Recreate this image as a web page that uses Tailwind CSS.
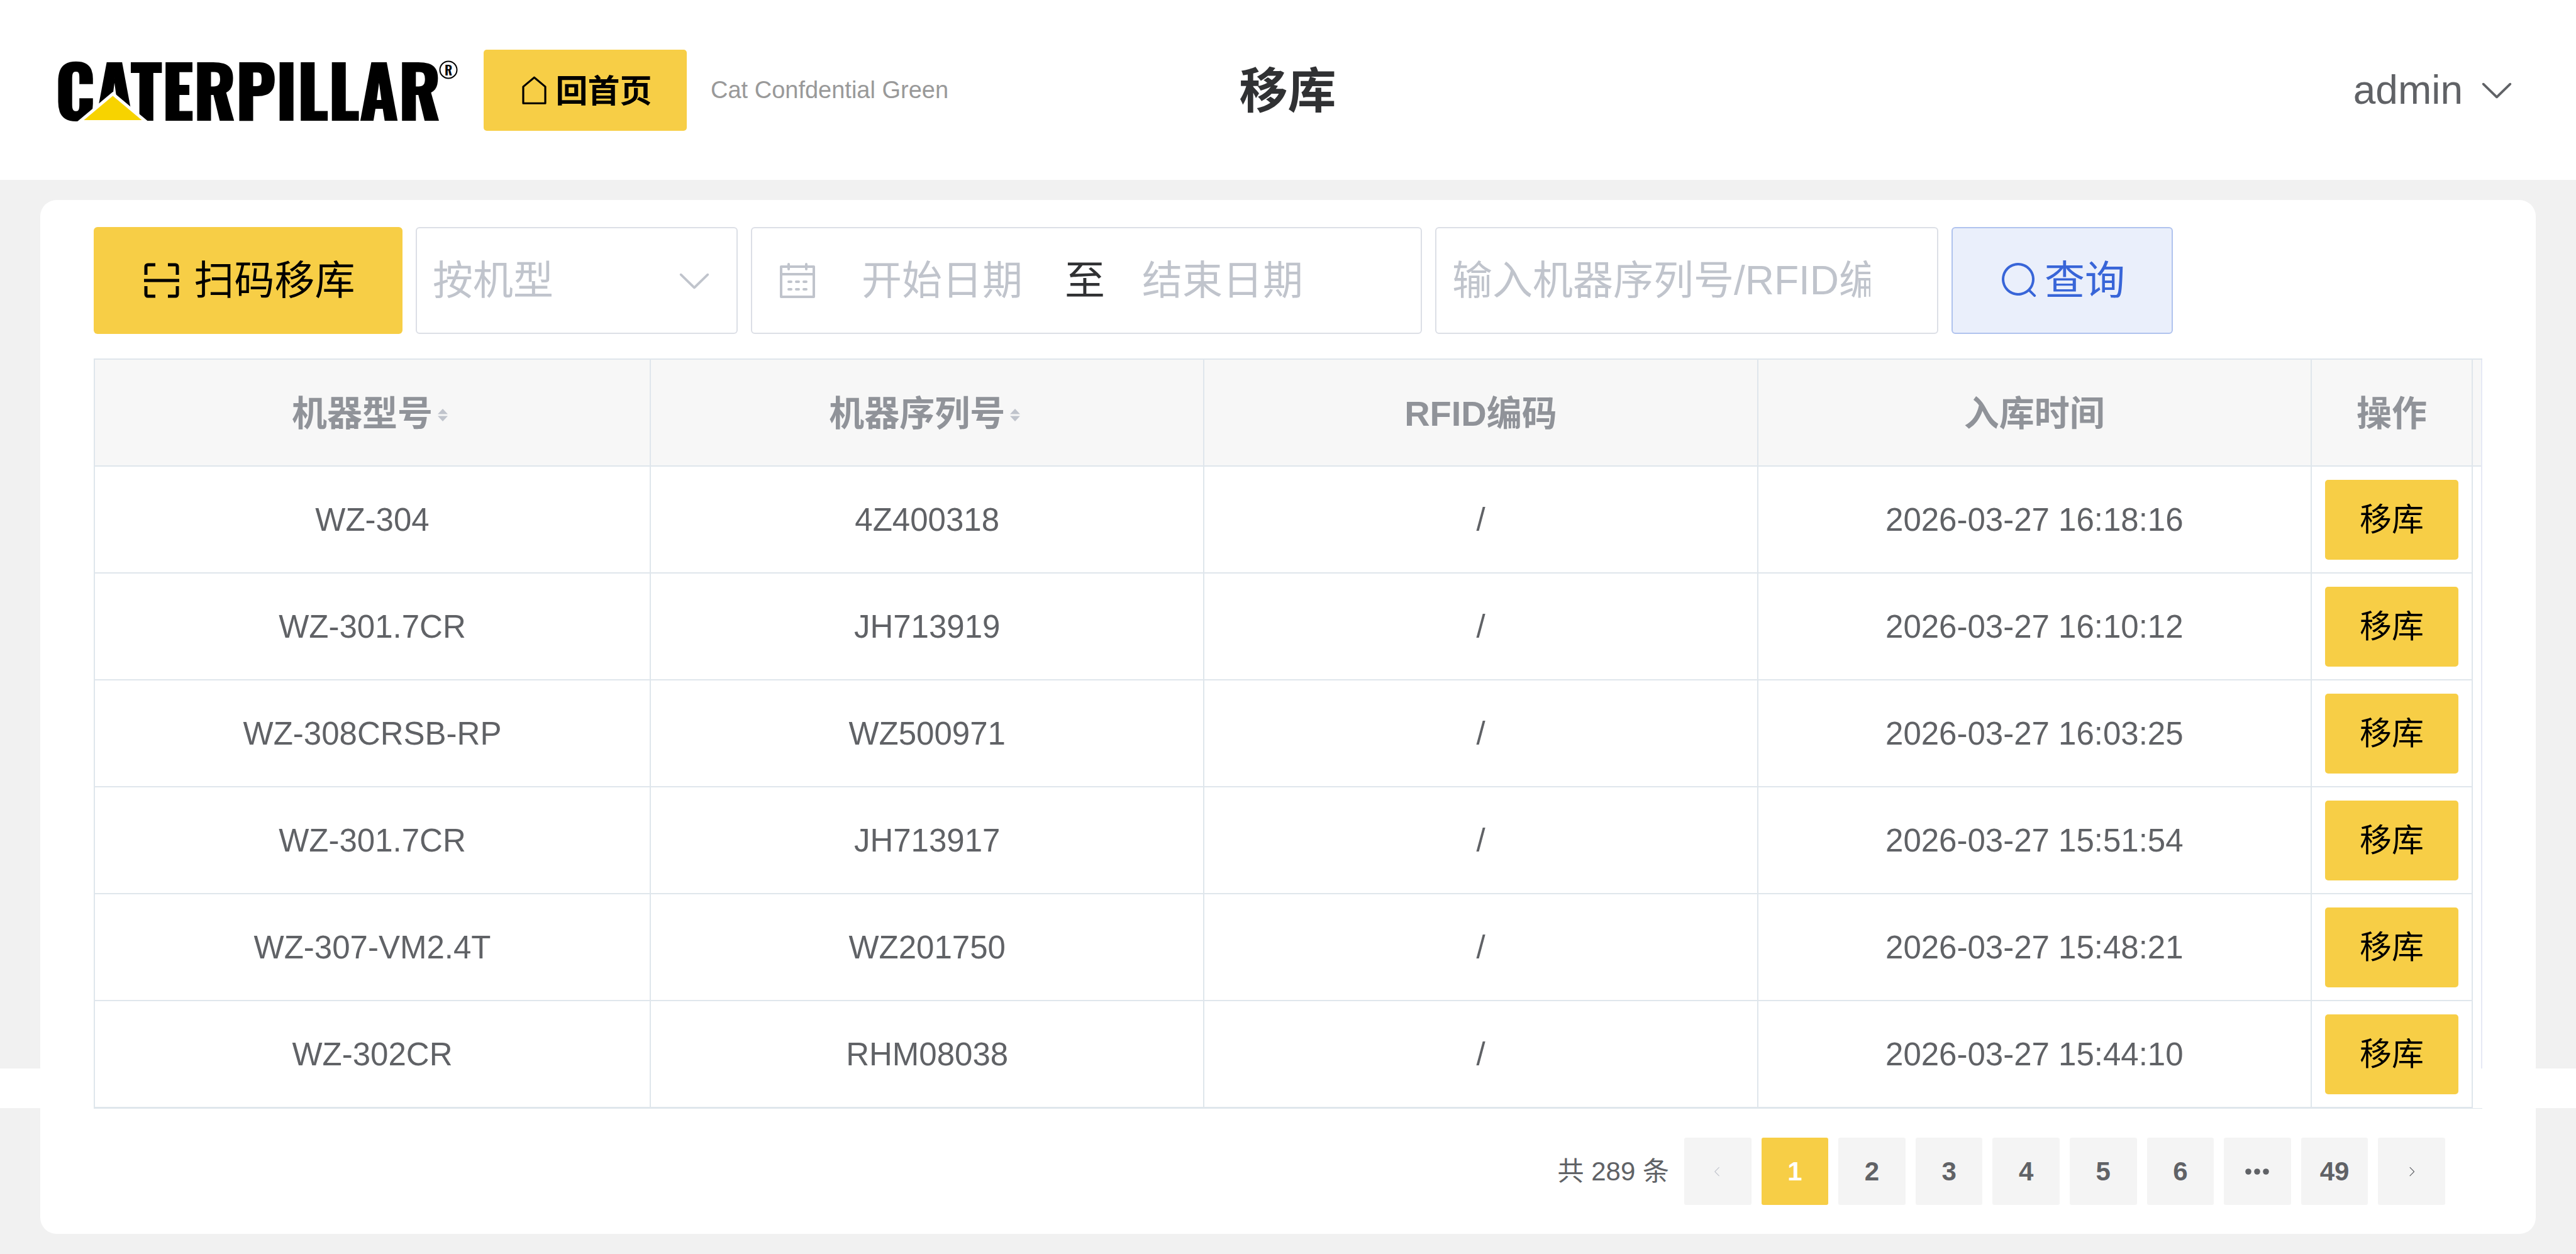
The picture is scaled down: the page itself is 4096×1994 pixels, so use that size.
<!DOCTYPE html>
<html lang="zh-CN">
<head>
    <meta charset="UTF-8">
    <meta name="viewport" content="width=device-width, initial-scale=1.0">
    <title>移库</title>
    <script src="https://cdn.jsdelivr.net/npm/@tailwindcss/browser@4"></script>
</head>
<body class="min-h-screen flex flex-col bg-white font-['Liberation_Sans','Noto_Sans_CJK_SC',sans-serif] text-[#606266]">
    <!-- Top bar -->
    <header class="h-[286px] shrink-0 grid grid-cols-[1fr_auto_1fr] items-center pl-[93px] pr-[94px]">
        <div class="flex items-center">
            <svg class="w-[636px] h-[96px] shrink-0 overflow-visible" viewBox="0 0 636 96" role="img" aria-label="Caterpillar">
                <text x="-5" y="96" font-size="112" font-weight="700" font-family="Oswald, 'Open Sans Condensed', sans-serif" stroke="#000" stroke-width="2">CATERPILLAR</text>
                <path d="M86.4 57.6 132.4 96H40.4z" fill="#fff" stroke="#fff" stroke-width="10"/>
                <path d="M86.4 57.6 132.4 96H40.4z" fill="#f7d300"/>
                <circle cx="620" cy="16" r="13.5" fill="none" stroke="#000" stroke-width="2"/>
                <text x="620" y="25" text-anchor="middle" font-size="21" font-weight="600" font-family="Oswald, 'Open Sans Condensed', sans-serif">R</text>
            </svg>
            <button class="ml-10 w-[323px] h-[129px] flex items-center justify-center gap-2 rounded-[5px] bg-[#f7ce46] text-black text-[51px] leading-none font-bold">
                <svg class="size-[51px]" viewBox="0 0 1024 1024" fill="currentColor"><path d="M192 413.952V896h640V413.952L512 147.328zM139.52 374.4l352-293.312a32 32 0 0 1 40.96 0l352 293.312A32 32 0 0 1 896 398.976V928a32 32 0 0 1-32 32H160a32 32 0 0 1-32-32V398.976a32 32 0 0 1 11.52-24.576"/></svg>
                <span class="pt-1">回首页</span>
            </button>
            <span class="ml-[38px] text-[38px] leading-none text-[#999]">Cat Confdential Green</span>
        </div>
        <h1 class="pt-1 text-[77px] leading-none font-bold text-[#303133]">移库</h1>
        <button class="justify-self-end flex items-center gap-[22px] text-[64px] leading-none">
            <span>admin</span>
            <svg class="size-16" viewBox="0 0 1024 1024" fill="currentColor"><path d="M831.872 340.864 512 652.672 192.128 340.864a30.592 30.592 0 0 0-42.752 0 29.12 29.12 0 0 0 0 41.6L489.664 714.24a32 32 0 0 0 44.672 0l340.288-331.712a29.12 29.12 0 0 0 0-41.728 30.592 30.592 0 0 0-42.752 0z"/></svg>
        </button>
    </header>

    <main class="relative isolate grow bg-[#f1f1f1] px-16 py-8">
        <!-- White strip behind the card -->
        <div class="absolute -z-10 inset-x-0 bottom-[232px] h-[63px] bg-white"></div>

        <section class="bg-white rounded-[26px] px-[85px] pt-[43px] pb-[46px]">
            <!-- Filters -->
            <form class="flex gap-[21px] mb-[39px] text-[64px] leading-none" onsubmit="return false">
                <button type="button" class="w-[491px] h-[170px] flex items-center justify-center gap-5 rounded-[6px] bg-[#f7ce46] text-black">
                    <svg class="size-16" viewBox="0 0 64 64" fill="none" stroke="currentColor" stroke-width="5">
                        <path d="M7 23V10a3 3 0 0 1 3-3h12M42 7h12a3 3 0 0 1 3 3v13M57 41v13a3 3 0 0 1-3 3H42M22 57H10a3 3 0 0 1-3-3V41M4 32h56"/>
                    </svg>
                    <span>扫码移库</span>
                </button>
                <div class="relative w-[512px]">
                    <select aria-label="按机型" class="appearance-none w-full h-[170px] pl-[25px] border-2 border-[#dcdfe6] rounded-[6px] bg-white text-[#c0c4cc]">
                        <option>按机型</option>
                    </select>
                    <svg class="absolute right-[37px] top-[53px] size-16 pointer-events-none text-[#c0c4cc]" viewBox="0 0 1024 1024" fill="currentColor"><path d="M831.872 340.864 512 652.672 192.128 340.864a30.592 30.592 0 0 0-42.752 0 29.12 29.12 0 0 0 0 41.6L489.664 714.24a32 32 0 0 0 44.672 0l340.288-331.712a29.12 29.12 0 0 0 0-41.728 30.592 30.592 0 0 0-42.752 0z"/></svg>
                </div>
                <div class="w-[1067px] h-[170px] flex items-center pl-10 border-2 border-[#dcdfe6] rounded-[6px]">
                    <svg class="size-16 mr-[11px] text-[#c0c4cc]" viewBox="0 0 1024 1024" fill="currentColor"><path d="M128 384v512h768V192H768v32a32 32 0 1 1-64 0v-32H320v32a32 32 0 0 1-64 0v-32H128v128h768v64zm192-256h384V96a32 32 0 1 1 64 0v32h160a32 32 0 0 1 32 32v768a32 32 0 0 1-32 32H96a32 32 0 0 1-32-32V160a32 32 0 0 1 32-32h160V96a32 32 0 0 1 64 0zm-32 384h64a32 32 0 0 1 0 64h-64a32 32 0 0 1 0-64m0 192h64a32 32 0 1 1 0 64h-64a32 32 0 1 1 0-64m192-192h64a32 32 0 0 1 0 64h-64a32 32 0 0 1 0-64m0 192h64a32 32 0 1 1 0 64h-64a32 32 0 1 1 0-64m192-192h64a32 32 0 1 1 0 64h-64a32 32 0 1 1 0-64m0 192h64a32 32 0 1 1 0 64h-64a32 32 0 1 1 0-64"/></svg>
                    <input type="text" aria-label="开始日期" placeholder="开始日期" class="w-[374px] h-full text-center placeholder:text-[#c0c4cc]">
                    <span class="w-[72px] text-right text-[#303133]">至</span>
                    <input type="text" aria-label="结束日期" placeholder="结束日期" class="w-[374px] h-full text-center placeholder:text-[#c0c4cc]">
                </div>
                <input type="text" aria-label="输入机器序列号/RFID编码" placeholder="输入机器序列号/RFID编码" class="w-[800px] h-[170px] pl-[25px] pr-[106px] border-2 border-[#dcdfe6] rounded-[6px] placeholder:text-[#c0c4cc]">
                <button type="submit" class="w-[352px] h-[170px] flex items-center justify-center gap-2 rounded-[6px] border-2 border-[#b0c3ee] bg-[#eaeffb] text-[#3865d8]">
                    <svg class="size-16" viewBox="0 0 1024 1024" fill="currentColor"><path d="m795.904 750.72 124.992 124.928a32 32 0 0 1-45.248 45.248L750.656 795.904a416 416 0 1 1 45.248-45.184zM480 832a352 352 0 1 0 0-704 352 352 0 0 0 0 704z"/></svg>
                    <span>查询</span>
                </button>
            </form>

            <!-- Stock table -->
            <div class="relative border-l-2 border-t-2 border-b border-[#dfe6ec]">
                <table class="w-full table-fixed border-separate border-spacing-0 text-center text-[51px] leading-none">
                    <thead class="text-[56px] text-[#909399]">
                        <tr class="h-[170px] *:p-0 *:pt-1 *:bg-[#f7f7f7] *:border-b-2 *:border-[#dfe6ec]">
                            <th class="w-[884px] border-r-2">
                                <div class="flex items-center justify-center">
                                    <span>机器型号</span>
                                    <svg class="w-8 h-5 mt-1" viewBox="0 0 32 20" fill="#c0c4cc"><path d="M16 0l8 8.500H8zM16 20l8-8.500H8z"/></svg>
                                </div>
                            </th>
                            <th class="border-r-2">
                                <div class="flex items-center justify-center">
                                    <span>机器序列号</span>
                                    <svg class="w-8 h-5 mt-1" viewBox="0 0 32 20" fill="#c0c4cc"><path d="M16 0l8 8.500H8zM16 20l8-8.500H8z"/></svg>
                                </div>
                            </th>
                            <th class="border-r-2">RFID编码</th>
                            <th class="border-r-2">入库时间</th>
                            <th class="w-[256px] border-r-2">操作</th>
                            <th class="w-[15px]"></th>
                        </tr>
                    </thead>
                    <tbody id="rows"></tbody>
                </table>
                <!-- Outer right edge, stops at the strip -->
                <div class="absolute right-0 top-0 bottom-[63px] w-[2px] bg-[#e6e9f5]"></div>
            </div>

            <!-- Pagination -->
            <nav class="flex items-center justify-end gap-6 mt-[46px] pr-[59px] text-[42px] leading-none">
                <span>共 289 条</span>
                <div class="grid grid-cols-10 gap-4 w-[1210px] font-bold">
                    <button disabled aria-label="上一页" class="h-[107px] grid place-items-center rounded-[3px] bg-[#f4f4f4] text-[#c0c4cc]">
                        <svg class="size-5" viewBox="0 0 1024 1024" fill="currentColor"><path d="M609.408 149.376 277.76 489.600a32 32 0 0 0 0 44.672l331.648 340.352a29.12 29.12 0 0 0 41.728 0 30.592 30.592 0 0 0 0-42.752L339.264 511.936l311.872-319.872a30.592 30.592 0 0 0 0-42.688 29.12 29.12 0 0 0-41.728 0z"/></svg>
                    </button>
                    <button class="h-[107px] rounded-[3px] bg-[#f7ce46] text-white">1</button>
                    <button class="h-[107px] rounded-[3px] bg-[#f4f4f4]">2</button>
                    <button class="h-[107px] rounded-[3px] bg-[#f4f4f4]">3</button>
                    <button class="h-[107px] rounded-[3px] bg-[#f4f4f4]">4</button>
                    <button class="h-[107px] rounded-[3px] bg-[#f4f4f4]">5</button>
                    <button class="h-[107px] rounded-[3px] bg-[#f4f4f4]">6</button>
                    <button aria-label="更多" class="h-[107px] grid place-items-center rounded-[3px] bg-[#f4f4f4]">
                        <svg class="w-10 h-[10px]" viewBox="0 0 40 10" fill="currentColor"><circle cx="6" cy="5" r="4.800"/><circle cx="20" cy="5" r="4.800"/><circle cx="34" cy="5" r="4.800"/></svg>
                    </button>
                    <button class="h-[107px] rounded-[3px] bg-[#f4f4f4]">49</button>
                    <button aria-label="下一页" class="h-[107px] grid place-items-center rounded-[3px] bg-[#f4f4f4]">
                        <svg class="size-5" viewBox="0 0 1024 1024" fill="currentColor"><path d="M340.864 149.312a30.592 30.592 0 0 0 0 42.752L652.736 512 340.864 831.872a30.592 30.592 0 0 0 0 42.752 29.12 29.12 0 0 0 41.728 0L714.24 534.336a32 32 0 0 0 0-44.672L382.592 149.376a29.12 29.12 0 0 0-41.728 0z"/></svg>
                    </button>
                </div>
            </nav>
        </section>
    </main>

    <script>
        const machines = [
            { model: 'WZ-304', serial: '4Z400318', rfid: '/', time: '2026-03-27 16:18:16' },
            { model: 'WZ-301.7CR', serial: 'JH713919', rfid: '/', time: '2026-03-27 16:10:12' },
            { model: 'WZ-308CRSB-RP', serial: 'WZ500971', rfid: '/', time: '2026-03-27 16:03:25' },
            { model: 'WZ-301.7CR', serial: 'JH713917', rfid: '/', time: '2026-03-27 15:51:54' },
            { model: 'WZ-307-VM2.4T', serial: 'WZ201750', rfid: '/', time: '2026-03-27 15:48:21' },
            { model: 'WZ-302CR', serial: 'RHM08038', rfid: '/', time: '2026-03-27 15:44:10' }
        ];

        document.getElementById('rows').innerHTML = machines.map(m => `
            <tr class="h-[170px]">
                <td class="p-0 border-b-2 border-r-2 border-[#dfe6ec]">${m.model}</td>
                <td class="p-0 border-b-2 border-r-2 border-[#dfe6ec]">${m.serial}</td>
                <td class="p-0 border-b-2 border-r-2 border-[#dfe6ec]">${m.rfid}</td>
                <td class="p-0 border-b-2 border-r-2 border-[#dfe6ec]">${m.time}</td>
                <td class="p-0 border-b-2 border-r-2 border-[#dfe6ec]">
                    <button class="block mx-auto w-[212px] h-[127px] rounded-[5px] bg-[#f7ce46] text-black">移库</button>
                </td>
                <td class="p-0"></td>
            </tr>
        `).join('');
    </script>
</body>
</html>
